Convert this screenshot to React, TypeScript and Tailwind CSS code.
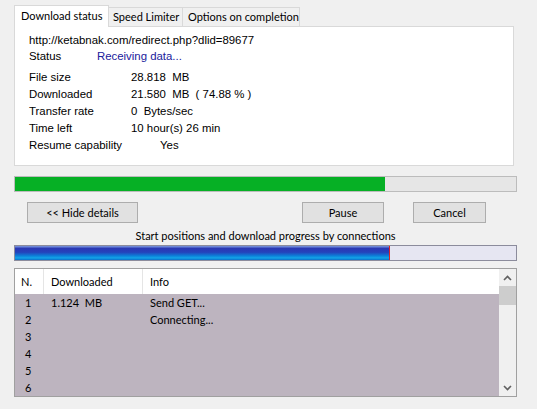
import React from "react";

const panelFont = { fontFamily: '"Liberation Sans", "Noto Sans", sans-serif' };
const uiFont = { fontFamily: 'Lato, "Noto Sans", sans-serif' };

function Row({ label, value, valueClass = "" }: { label: string; value: string; valueClass?: string }) {
  return (
    <div className="flex h-[17px] items-center whitespace-pre">
      <div className="w-[102px]">{label}</div>
      <div className={valueClass}>{value}</div>
    </div>
  );
}

export default function App() {
  const rows = [
    { n: "1", d: "1.124  MB", i: "Send GET..." },
    { n: "2", d: "", i: "Connecting..." },
    { n: "3", d: "", i: "" },
    { n: "4", d: "", i: "" },
    { n: "5", d: "", i: "" },
    { n: "6", d: "", i: "" },
  ];
  return (
    <div className="w-[537px] h-[409px] bg-[#f0f0f0] overflow-hidden text-[11px] text-black leading-none whitespace-nowrap" style={uiFont}>
      {/* tabs */}
      <div className="flex items-end pl-[14px] h-[26px]">
        <div className="h-[22px] w-[95px] bg-white border border-[#d9d9d9] border-b-0 flex items-center pl-[6px] pb-[2px] relative z-10 -mb-px">
          Download status
        </div>
        <div className="h-[19px] w-[74px] bg-[#f0f0f0] border border-[#d9d9d9] border-l-0 border-b-0 flex items-center pl-[4px] pb-[1px]">
          Speed Limiter
        </div>
        <div className="h-[19px] w-[117px] bg-[#f0f0f0] border border-[#d9d9d9] border-l-0 border-b-0 flex items-center pl-[5px] pb-[1px]">
          Options on completion
        </div>
      </div>
      {/* panel */}
      <div className="ml-[14px] w-[500px] h-[140px] bg-white border border-[#d9d9d9] pl-[14px] pt-[6px] text-[11.4px]" style={panelFont}>
        <div className="h-[16px] flex items-center">http://ketabnak.com/redirect.php?dlid=89677</div>
        <div className="flex h-[16px] items-center">
          <div className="w-[68px]">Status</div>
          <div className="text-[#20209c]">Receiving data...</div>
        </div>
        <div className="h-[4px]" />
        <Row label="File size" value="28.818  MB" />
        <Row label="Downloaded" value="21.580  MB  ( 74.88 % )" />
        <Row label="Transfer rate" value="0  Bytes/sec" />
        <Row label="Time left" value="10 hour(s) 26 min" />
        <div className="flex h-[17px] items-center">
          <div className="w-[131px]">Resume capability</div>
          <div>Yes</div>
        </div>
      </div>
      {/* green progress */}
      <div className="ml-[14px] mt-[10px] w-[503px] h-[16px] bg-[#e6e6e6] border border-[#bcbcbc] flex">
        <div className="w-[370px] h-full bg-[#06b025]" />
      </div>
      {/* buttons */}
      <div className="flex mt-[10px] h-[21px]">
        <div className="ml-[27px] w-[111px] h-full bg-[#e1e1e1] border border-[#adadad] flex items-center justify-center">&lt;&lt; Hide details</div>
        <div className="ml-[164px] w-[82px] h-full bg-[#e1e1e1] border border-[#adadad] flex items-center justify-center">Pause</div>
        <div className="ml-[29px] w-[73px] h-full bg-[#e1e1e1] border border-[#adadad] flex items-center justify-center">Cancel</div>
      </div>
      <div className="w-[531px] text-center mt-[4px] h-[16px] flex items-center justify-center">Start positions and download progress by connections</div>
      {/* blue progress */}
      <div className="ml-[14px] mt-[2px] w-[503px] h-[16px] border border-[#8c8c9c] bg-[#e6e6f2] flex">
        <div
          className="w-[375px] h-full border-r border-[#e02020]"
          style={{ background: "linear-gradient(to bottom, #7f9ce0 0%, #2a38b4 18%, #2443bc 45%, #0c7fd8 70%, #12a4e8 85%, #0b70cc 100%)" }}
        />
      </div>
      {/* list */}
      <div className="ml-[14px] mt-[7px] w-[503px] h-[129px] border border-[#a0a0a0] bg-white flex whitespace-pre">
        <div className="flex-1 flex flex-col">
          <div className="h-[25px] flex items-center bg-white">
            <div className="w-[29px] pl-[6px] h-full flex items-center border-r border-[#e5e5e5]">N.</div>
            <div className="w-[99px] pl-[7px] h-full flex items-center border-r border-[#e5e5e5]">Downloaded</div>
            <div className="flex-1 pl-[7px] h-full flex items-center">Info</div>
          </div>
          <div className="flex-1 bg-[#bdb4bf]">
            {rows.map((r) => (
              <div key={r.n} className="h-[17px] flex items-center">
                <div className="w-[29px] pl-[10px]">{r.n}</div>
                <div className="w-[99px] pl-[7px]">{r.d}</div>
                <div className="flex-1 pl-[7px]">{r.i}</div>
              </div>
            ))}
          </div>
        </div>
        <div className="w-[17px] bg-[#f0f0f0] flex flex-col items-center">
          <div className="h-[17px] w-full flex items-center justify-center">
            <svg width="9" height="6" viewBox="0 0 9 6"><path d="M1 5 L4.5 1.5 L8 5" stroke="#606060" strokeWidth="1.6" fill="none" /></svg>
          </div>
          <div className="w-full h-[19px] bg-[#cdcdcd]" />
          <div className="flex-1" />
          <div className="h-[17px] w-full flex items-center justify-center">
            <svg width="9" height="6" viewBox="0 0 9 6"><path d="M1 1 L4.5 4.5 L8 1" stroke="#606060" strokeWidth="1.6" fill="none" /></svg>
          </div>
        </div>
      </div>
    </div>
  );
}
